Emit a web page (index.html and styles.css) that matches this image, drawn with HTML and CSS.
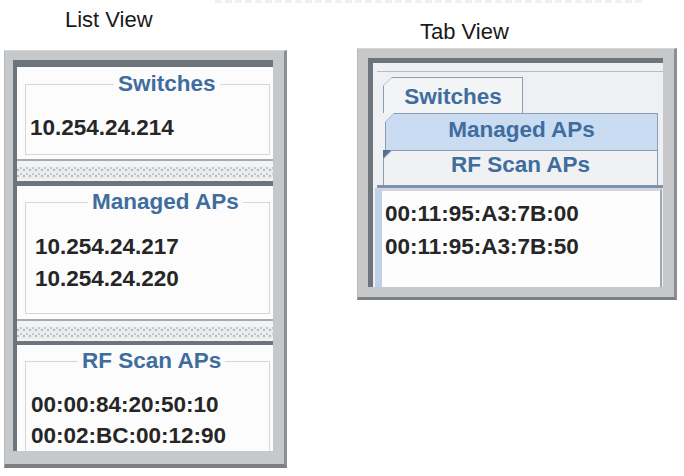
FILE: index.html
```html
<!DOCTYPE html>
<html lang="en">
<head>
<meta charset="utf-8">
<title>Views</title>
<link rel="stylesheet" href="styles.css">
</head>
<body>
<div class="page">
  <div class="top-strip"></div>
  <div class="views">
    <section class="view view-list">
      <div class="view-label">List View</div>
      <div class="frame frame-list">
        <div class="list-body">
          <div class="list-section sec-switches">
            <fieldset class="group">
              <legend>Switches</legend>
              <ul class="items"><li>10.254.24.214</li></ul>
            </fieldset>
          </div>
          <div class="splitter"><div class="grip"></div></div>
          <div class="list-section sec-managed">
            <fieldset class="group">
              <legend>Managed APs</legend>
              <ul class="items"><li>10.254.24.217</li><li>10.254.24.220</li></ul>
            </fieldset>
          </div>
          <div class="splitter"><div class="grip"></div></div>
          <div class="list-section sec-rf">
            <fieldset class="group">
              <legend>RF Scan APs</legend>
              <ul class="items"><li>00:00:84:20:50:10</li><li>00:02:BC:00:12:90</li></ul>
            </fieldset>
          </div>
        </div>
      </div>
    </section>

    <section class="view view-tab">
      <div class="view-label">Tab View</div>
      <div class="frame frame-tab">
        <div class="tab-body">
          <div class="tab-strip">
            <div class="tab tab-switches"><div class="tab-face">Switches</div></div>
            <div class="tab tab-managed"><div class="tab-face">Managed APs</div></div>
            <div class="tab tab-rf"><div class="tab-face">RF Scan APs</div></div>
          </div>
          <ul class="tab-content">
            <li>00:11:95:A3:7B:00</li>
            <li>00:11:95:A3:7B:50</li>
          </ul>
        </div>
      </div>
    </section>
  </div>
</div>
</body>
</html>
```

FILE: styles.css
```css
* { box-sizing: border-box; }

html, body {
  margin: 0;
  padding: 0;
  background: #ffffff;
}

body {
  font-family: "Liberation Sans", Arial, sans-serif;
  color: #1c1c1c;
  width: 684px;
  height: 476px;
  overflow: hidden;
}

.page {
  display: flex;
  flex-direction: column;
}

/* faint clipped caption line along the top edge */
.top-strip {
  height: 3px;
  margin-left: 215px;
  width: 430px;
  background: repeating-linear-gradient(90deg, #e6e6e6 0 7px, transparent 7px 10px);
  opacity: 0.6;
  margin-bottom: 1px;
}

.views {
  display: flex;
  align-items: flex-start;
}

.view-label {
  font-size: 22px;
  line-height: 26px;
  color: #1a1a1a;
  height: 26px;
}

/* ---------- list view ---------- */
.view-list {
  width: 283px;
  margin-left: 4px;
}

.view-list .view-label {
  padding-left: 61px;
  margin-top: 3px;
  margin-bottom: 17px;
}

.frame {
  background: #c6c8ca;
  border: 1px solid #b4b6b8;
  border-top-color: #d4d6d8;
  border-left-color: #b8babc;
  border-right: 3px solid #8c9094;
  border-bottom: 4px solid #7c8084;
}

.frame-list {
  height: 418px;
  padding: 9px 11px 13px 8px;
}

.list-body {
  height: 100%;
  display: flex;
  flex-direction: column;
  background: #fbfbfc;
  border-top: 7px solid #6d747b;
  border-left: 4px solid #6d747b;
}

.list-section {
  background: #fcfcfd;
  padding: 5px 3px 4px 8px;
  border-bottom: 2px solid #a6aaae;
}

.sec-managed {
  border-top: 5px solid #6d747b;
  padding-top: 4px;
  padding-bottom: 5px;
}

.sec-rf {
  border-top: 4px solid #6d747b;
  border-bottom: 0;
  padding-top: 4px;
  flex: 1;
  overflow: hidden;
}

.group {
  margin: 0;
  padding: 0 0 10px 0;
  border: 1px solid #d3d7db;
  min-width: 0;
}

.group legend {
  padding: 0 4px;
  font-size: 22.5px;
  line-height: 24px;
  font-weight: bold;
  color: #3f6d9d;
}

.sec-switches legend { margin-left: 88px; }
.sec-managed legend { margin-left: 62px; }
.sec-rf legend { margin-left: 52px; }

.sec-managed .group { padding-bottom: 18px; }
.sec-rf .group { padding-bottom: 30px; }

.items {
  list-style: none;
  margin: 0;
  padding: 16px 0 0 4px;
  font-size: 22.5px;
  line-height: 32px;
  font-weight: bold;
  color: #262626;
}

.sec-managed .items { padding-top: 17px; padding-left: 9px; }
.sec-rf .items { padding-left: 5px; line-height: 31px; }

.splitter {
  height: 20px;
  background: #f1f2f3;
  padding-top: 6px;
}

/* dotted grip of the split pane divider */
.grip {
  height: 12px;
  background-color: #eaecee;
  background-image:
    radial-gradient(circle at 1px 1px, #b4b8bc 0.8px, transparent 1.1px),
    radial-gradient(circle at 1px 1px, #c6c9cc 0.8px, transparent 1.1px);
  background-size: 6px 6px, 6px 6px;
  background-position: 0 2px, 3px 6px;
}

/* ---------- tab view ---------- */
.view-tab {
  width: 320px;
  margin-left: 70px;
}

.view-tab .view-label {
  padding-left: 63px;
  margin-top: 15px;
  margin-bottom: 3px;
}

.frame-tab {
  height: 252px;
  padding: 9px 11px 10px 10px;
  border-bottom-width: 3px;
}

.tab-body {
  height: 100%;
  background: #eef0f3;
  border-top: 5px solid #6d747b;
  border-left: 5px solid #6d747b;
  padding-top: 8px;
  display: flex;
  flex-direction: column;
}

.tab-strip {
  border-top: 1px solid #b9bdc1;
  padding-top: 5px;
  display: flex;
  flex-direction: column;
  align-items: flex-start;
  border-bottom: 3px solid #7f92aa;
  margin-left: 4px;
  padding-left: 6px;
}

/* tab outline with the clipped top-left corner */
.tab {
  position: relative;
  background: #8b9db3;
  padding: 1px 1px 0 1px;
  clip-path: polygon(9px 0, 100% 0, 100% 100%, 0 100%, 0 9px);
}

.tab-face {
  clip-path: polygon(7.6px 0, 100% 0, 100% 100%, 0 100%, 0 7.6px);
  font-size: 22.5px;
  line-height: 25px;
  font-weight: bold;
  color: #3f6d9d;
  text-align: center;
}

.tab-switches {
  width: 140px;
}
.tab-switches .tab-face {
  background: #f3f4f6;
  height: 35px;
  padding-top: 6px;
}

.tab-managed {
  width: 273px;
  margin-left: 2px;
}
.tab-managed .tab-face {
  background: #c9dcf2;
  height: 36px;
  padding-top: 3px;
}

/* the last tab keeps its corner, filled by a small dark wedge */
.tab-rf {
  width: 275px;
  clip-path: none;
}
.tab-rf .tab-face {
  background: #f0f1f3;
  height: 34px;
  padding-top: 1px;
}

.tab-rf::before {
  content: "";
  position: absolute;
  left: 0;
  top: 0;
  width: 0;
  height: 0;
  border-top: 8px solid #566f91;
  border-right: 8px solid transparent;
}

.tab-content {
  flex: 1;
  list-style: none;
  margin: 0 1px 0 2px;
  padding: 6px 0 0 3px;
  background: #fdfdfe;
  border-top: 3px solid #cfd6e0;
  border-left: 7px solid #c0d0e6;
  border-right: 2px solid #a3a7ab;
  font-size: 22.5px;
  line-height: 33px;
  font-weight: bold;
  color: #262626;
}
```
